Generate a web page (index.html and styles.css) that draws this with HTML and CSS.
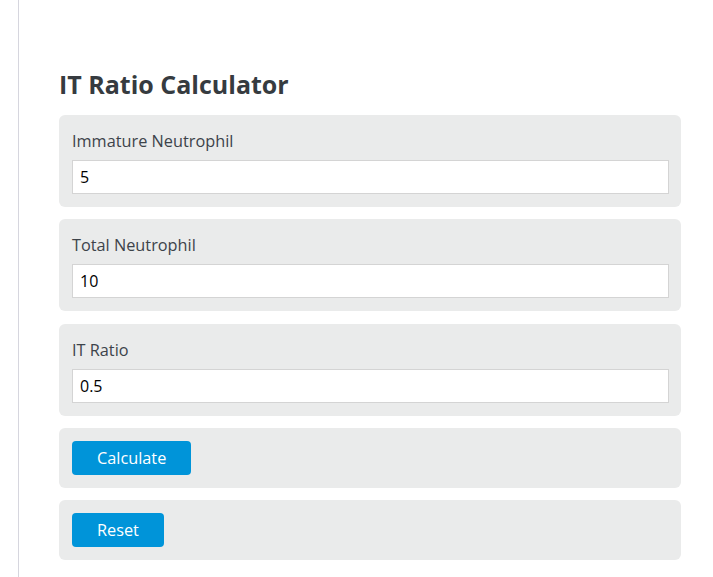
FILE: index.html
```html
<!DOCTYPE html>
<html lang="en">
<head><meta charset="UTF-8"/><meta name="viewport" content="width=device-width, initial-scale=1.0"/>
<title>IT Ratio Calculator</title>
<link rel="stylesheet" href="styles.css">
</head><body>
<div class="page">
 <div class="calc">
  <h1>IT Ratio Calculator</h1>
  <div class="row">
   <label for="imm">Immature Neutrophil</label>
   <input id="imm" value="5"/>
  </div>
  <div class="row">
   <label for="tot">Total Neutrophil</label>
   <input id="tot" value="10"/>
  </div>
  <div class="row">
   <label for="ratio">IT Ratio</label>
   <input id="ratio" value="0.5"/>
  </div>
  <div class="row btn-row"><button class="btn">Calculate</button></div>
  <div class="row btn-row"><button class="btn">Reset</button></div>
 </div>
</div>
</body></html>
```

FILE: styles.css
```css
body{margin:0;font-family:"Open Sans",sans-serif;background:#fff;color:#3a3f44;}
.page{margin-left:18px;border-left:1px solid #d6d6de;min-height:577px;padding:68px 0 0 40px;box-sizing:border-box;}
.calc{width:622px;}
h1{margin:0 0 15px;font-size:25px;line-height:32px;font-weight:700;color:#363b40;}
.row{background:#eaebeb;border-radius:6px;padding:13px 12px 13px 13px;margin-bottom:12.25px;display:flex;flex-direction:column;}
.row label{font-size:16.3px;line-height:22px;padding-top:2px;margin-bottom:8px;color:#3d434a;}
.row input{height:34px;box-sizing:border-box;border:1px solid #d4d4d4;padding:0 7px;font-size:16px;font-family:"Open Sans",sans-serif;color:#000;background:#fff;outline:none;}
.btn-row{align-items:flex-start;}
.btn{height:34px;padding:0 25px;border:none;border-radius:4px;background:#0094d9;color:#fff;font-size:16.3px;font-family:"Open Sans",sans-serif;cursor:pointer;}
```
